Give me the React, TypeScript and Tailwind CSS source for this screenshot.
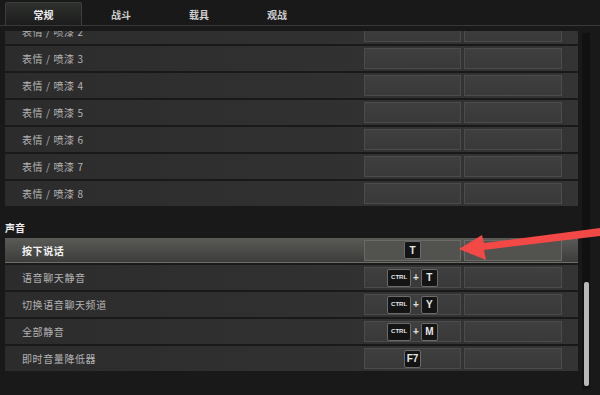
import React from "react";

const font = { fontFamily: '"Noto Sans CJK SC", "Noto Sans", sans-serif' };

function Key({ label, small }: { label: string; small?: boolean }) {
  return (
    <div
      className={`flex h-[18px] items-center justify-center rounded-[2px] border border-[#6b6b6b] bg-[#141414] text-[#e8e8e8] ${
        small ? "w-[24px] text-[6px] font-bold" : "w-[17px] text-[10px] font-bold"
      }`}
      style={{ fontFamily: '"Liberation Sans", sans-serif' }}
    >
      {label}
    </div>
  );
}

function Binding({ keys }: { keys?: string[] }) {
  return (
    <div className="flex items-center justify-center gap-[2px]">
      {keys &&
        keys.map((k, i) => (
          <React.Fragment key={i}>
            {i > 0 && (
              <span className="text-[10px] font-bold text-[#e0e0e0]" style={{ fontFamily: '"Liberation Sans", sans-serif' }}>
                +
              </span>
            )}
            <Key label={k} small={k === "CTRL"} />
          </React.Fragment>
        ))}
    </div>
  );
}

function Row({ label, keys, active }: { label: string; keys?: string[]; active?: boolean }) {
  return (
    <div
      className={`flex h-[25px] items-center ${
        active
          ? "bg-gradient-to-b from-[#5a5b57] to-[#3d3e3b] border-b border-[#6e6f6a]"
          : "bg-gradient-to-r from-[#2c2c2c] to-[#343434]"
      }`}
    >
      <div
        className={`flex-1 pl-[17px] text-[10px] tracking-[0.6px] ${
          active ? "font-bold text-[#f2f2f2]" : "text-[#b4b4b4]"
        }`}
        style={font}
      >
        {label}
      </div>
      <div
        className={`flex h-[21px] w-[97px] items-center justify-center border ${
          active ? "border-[#6a6b66] bg-[#52534f]" : "border-[#4c4c4c] bg-gradient-to-b from-[#3f3f3f] to-[#393939]"
        }`}
      >
        <Binding keys={keys} />
      </div>
      <div
        className={`ml-[3px] mr-[16px] h-[21px] w-[98px] border ${
          active ? "border-[#6a6b66] bg-[#52534f]" : "border-[#4c4c4c] bg-gradient-to-b from-[#3f3f3f] to-[#393939]"
        }`}
      />
    </div>
  );
}

export default function App() {
  const emotes = [2, 3, 4, 5, 6, 7, 8];
  return (
    <div className="relative h-[395px] w-[600px] overflow-hidden bg-[#19191a]" style={font}>
      {/* Tabs */}
      <div className="flex h-[26px] items-end border-b border-[#383838] pl-[5px] pr-[10px]">
        <div className="flex h-[23px] w-[77px] items-center justify-center rounded-t-[2px] border border-b-0 border-[#3c3e3c] bg-gradient-to-b from-[#2f312f] to-[#1b1c1b] pt-[1px] text-[10px] font-bold text-[#f0f0f0]">
          常规
        </div>
        {["战斗", "载具", "观战"].map((t) => (
          <div key={t} className="flex h-[23px] w-[78px] items-center justify-center pt-[1px] text-[10px] font-bold text-[#cfcfcf]">
            {t}
          </div>
        ))}
      </div>

      <div className="flex h-[369px]">
        <div className="ml-[5px] mt-[5px] w-[573px] overflow-hidden">
          <div className="-mt-[12px] flex flex-col gap-[2px]">
            {emotes.map((n) => (
              <Row key={n} label={`表情 / 喷漆 ${n}`} />
            ))}
          </div>
          <div className="flex h-[32px] items-end pb-[3px] text-[10px] font-bold text-[#f0f0f0]">声音</div>
          <div className="flex flex-col gap-[2px]">
            <Row label="按下说话" keys={["T"]} active />
            <Row label="语音聊天静音" keys={["CTRL", "T"]} />
            <Row label="切换语音聊天频道" keys={["CTRL", "Y"]} />
            <Row label="全部静音" keys={["CTRL", "M"]} />
            <Row label="即时音量降低器" keys={["F7"]} />
          </div>
        </div>
        {/* Scrollbar */}
        <div className="ml-[4px] mt-[7px] flex h-[356px] w-[8px] flex-col justify-end bg-[#111112]">
          <div className="mx-auto mb-[3px] h-[104px] w-[5px] rounded-[2px] bg-[#b8b8b8]" />
        </div>
      </div>

      {/* Red arrow overlay */}
      <svg className="pointer-events-none absolute left-0 top-0" width="600" height="395">
        <polygon points="600,228 600,236 484,250 486,260 459,249 482,235 484,243" fill="#f24846" />
      </svg>
    </div>
  );
}
